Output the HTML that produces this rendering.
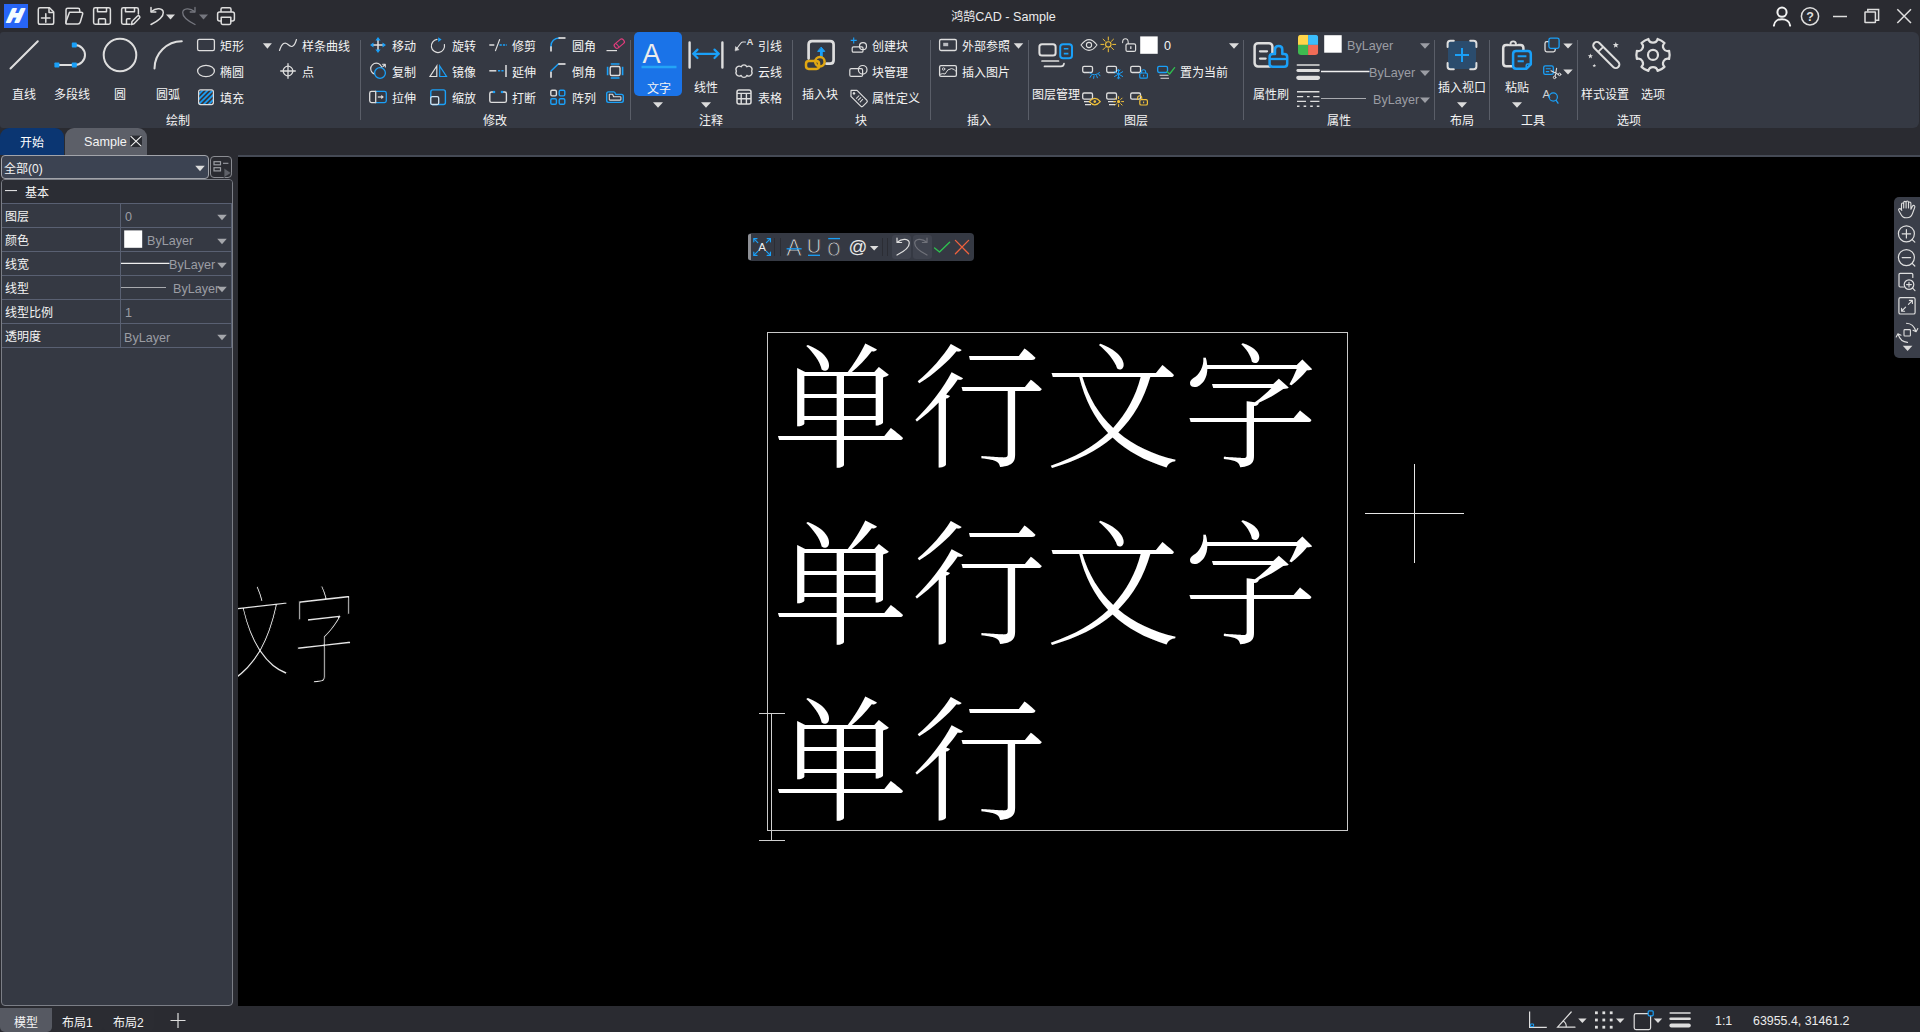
<!DOCTYPE html>
<html lang="zh-CN">
<head>
<meta charset="utf-8">
<title>鸿鹄CAD - Sample</title>
<style>
*{box-sizing:border-box;margin:0;padding:0}
html,body{width:1920px;height:1032px;overflow:hidden;background:#2a2b31}
body{position:relative;font-family:"Liberation Sans","Noto Sans CJK SC",sans-serif;font-size:12px;color:#f2f2f2}
.abs{position:absolute}
svg{position:absolute;overflow:visible}
.t{position:absolute;white-space:nowrap;line-height:14px;height:14px;font-size:12px;color:#f4f4f4}
.tc{text-align:center}
#title{left:0;top:0;width:1920px;height:32px;background:#2a2b31}
#ribbon{left:0;top:32px;width:1919px;height:95.5px;background:#353943;border-radius:3px 6px 6px 3px}
.sep{position:absolute;top:40px;width:1px;height:80px;background:#5a5e68}
#tab1{left:0;top:128px;width:64px;height:27px;background:#0b3672;border-radius:9px 9px 0 0}
#tab2{left:65px;top:128px;width:82px;height:27px;background:#5c5f68;border-radius:9px 9px 0 0}
#hline{left:238px;top:155px;width:1682px;height:2px;background:#454a55}
#canvas{left:238px;top:157px;width:1682px;height:849px;background:#000;overflow:hidden}
#lpanel{left:0;top:155px;width:234px;height:852px;background:#2a2b31}
#bottom{left:0;top:1006px;width:1920px;height:26px;background:#2a2b31}

</style>
</head>
<body>
<div id="title" class="abs"></div>
<div id="ribbon" class="abs"></div>
<div id="tab1" class="abs"></div>
<div id="tab2" class="abs"></div>
<div id="hline" class="abs"></div>
<div id="canvas" class="abs"></div>
<div id="lpanel" class="abs"></div>
<div id="bottom" class="abs"></div>
<div class="sep" style="left:360px"></div>
<div class="sep" style="left:630px"></div>
<div class="sep" style="left:792px"></div>
<div class="sep" style="left:930px"></div>
<div class="sep" style="left:1028px"></div>
<div class="sep" style="left:1243px"></div>
<div class="sep" style="left:1434px"></div>
<div class="sep" style="left:1489px"></div>
<div class="sep" style="left:1577px"></div>
<div class="abs" style="left:634px;top:32px;width:48px;height:64px;background:#1a73e8;border-radius:5px"></div>
<div class="abs" style="left:1px;top:155px;width:208px;height:24px;background:#3c4352;border:1px solid #a2a4aa;border-radius:4px"></div>
<div class="abs" style="left:210.4px;top:156.4px;width:21.4px;height:21.4px;border:1.3px solid #8b8d93;border-radius:4px"></div>
<div class="abs" style="left:1px;top:179px;width:232px;height:827px;background:#353943;border:1px solid #7b7e86;border-radius:4px"></div>
<div class="abs" style="left:2px;top:180px;width:230px;height:23px;background:#2b2d34;border-radius:3px 3px 0 0"></div>
<div class="abs" style="left:2px;top:203px;width:230px;height:1px;background:#596072"></div>
<div class="abs" style="left:2px;top:227px;width:230px;height:1px;background:#596072"></div>
<div class="abs" style="left:2px;top:251px;width:230px;height:1px;background:#596072"></div>
<div class="abs" style="left:2px;top:275px;width:230px;height:1px;background:#596072"></div>
<div class="abs" style="left:2px;top:299px;width:230px;height:1px;background:#596072"></div>
<div class="abs" style="left:2px;top:323px;width:230px;height:1px;background:#596072"></div>
<div class="abs" style="left:2px;top:347px;width:230px;height:1px;background:#596072"></div>
<div class="abs" style="left:120px;top:203px;width:1px;height:145px;background:#596072"></div>
<div class="abs" style="left:231px;top:203px;width:1px;height:145px;background:#596072"></div>
<div class="abs" style="left:748px;top:233px;width:226px;height:28px;background:#353943;border-radius:4px"></div>
<div class="abs" style="left:748px;top:234px;width:3px;height:26px;background:#8d8f95;border-radius:2px 0 0 2px"></div>
<div class="abs" style="left:892px;top:235px;width:19px;height:24px;background:#3f434e;border-radius:3px"></div>
<div class="abs" style="left:913px;top:235px;width:19px;height:24px;background:#3f434e;border-radius:3px"></div>
<div class="abs" style="left:1894px;top:197px;width:30px;height:161px;background:#3a3e49;border-radius:5px"></div>
<div class="abs" style="left:0;top:1008px;width:52px;height:24px;background:#565962;border-radius:0 0 5px 5px"></div>
<div class="abs" style="left:52px;top:1008px;width:51px;height:24px;background:#2b2c32;border-radius:0 0 5px 5px"></div>
<div class="abs" style="left:103px;top:1008px;width:51px;height:24px;background:#2b2c32;border-radius:0 0 5px 5px"></div>
<svg id="ov" class="abs" style="left:0;top:0" width="1920" height="1032" viewBox="0 0 1920 1032" fill="none" stroke-linecap="round" stroke-linejoin="round">
<rect x="4" y="4" width="24" height="24" fill="#2765f6" stroke="none"/>
<g transform="translate(12.6 22.2) skewX(-24) scale(1.1 1.08)"><text x="0" y="0" text-anchor="middle" font-family="'Liberation Sans',sans-serif" font-size="17.5" font-weight="bold" fill="#f2fbff" stroke="#f2fbff" stroke-width="2" stroke-linejoin="round">H</text></g>
<path d="M40 7.8H49.5L53.7 12V22.5Q53.7 24.3 52 24.3H40Q38.3 24.3 38.3 22.5V9.5Q38.3 7.8 40 7.8Z" stroke="#dedede" stroke-width="1.5"/><path d="M49 8.2V12.5H53.3" stroke="#dedede" stroke-width="1.5" stroke-width="1"/><path d="M41.5 18H50M45.8 13.7V22.3" stroke="#dedede" stroke-width="1.5"/>
<path d="M66 22.5V10Q66 8.3 67.7 8.3H78Q79.7 8.3 79.7 10V12.3" stroke="#dedede" stroke-width="1.5"/><path d="M69.5 12.3H81Q83.2 12.3 82.6 14.3L80.3 22Q79.7 24 77.8 24H67.2Q65.3 24 65.9 22Z" stroke="#dedede" stroke-width="1.5"/>
<path d="M95.3 7.8H108.7Q110.4 7.8 110.4 9.5V22.6Q110.4 24.3 108.7 24.3H95.3Q93.6 24.3 93.6 22.6V9.5Q93.6 7.8 95.3 7.8Z" stroke="#dedede" stroke-width="1.5"/><path d="M97.5 8V11.7H106.5V8M98.5 24V19.8Q98.5 18.8 99.5 18.8H104.5Q105.5 18.8 105.5 19.8V24" stroke="#dedede" stroke-width="1.5"/>
<path d="M130 24.3H123.3Q121.6 24.3 121.6 22.6V9.5Q121.6 7.8 123.3 7.8H136.7Q138.4 7.8 138.4 9.5V14" stroke="#dedede" stroke-width="1.5"/><path d="M125.5 8V11.7H134.5V8M126.5 24V19.8Q126.5 18.8 127.5 18.8H130" stroke="#dedede" stroke-width="1.5"/><path d="M131.5 24.5L132 21.5L137.5 16Q138.5 15.2 139.5 16.2Q140.3 17.2 139.5 18L134 23.7Z" stroke="#dedede" stroke-width="1.5" stroke-width="1.2"/>
<path d="M151 24.5C157 21.5 163.5 17.5 163.3 12.5C163 8 156 7.5 151.5 11.5" stroke="#dedede" stroke-width="1.5" stroke-width="1.3"/><path d="M151 7.5V12H155.8" stroke="#dedede" stroke-width="1.5" stroke-width="1.3"/>
<path d="M166.0 14.5H175.0L170.5 19.5Z" fill="#dcdcdc"/>
<path d="M195 24.5C189 21.5 182.5 17.5 182.7 12.5C183 8 190 7.5 194.5 11.5" stroke="#75777f" stroke-width="1.3"/><path d="M195 7.5V12H190.2" stroke="#75777f" stroke-width="1.3"/>
<path d="M199.0 14.5H208.0L203.5 19.5Z" fill="#75777f"/>
<path d="M221 11.5V9.2Q221 7.8 222.4 7.8H229.6Q231 7.8 231 9.2V11.5" stroke="#dedede" stroke-width="1.5"/><path d="M221 21H219.6Q217.6 21 217.6 19V14Q217.6 12 219.6 12H232.4Q234.4 12 234.4 14V19Q234.4 21 232.4 21H231" stroke="#dedede" stroke-width="1.5"/><path d="M221.2 17.3H230.8V23Q230.8 24.4 229.4 24.4H222.6Q221.2 24.4 221.2 23Z" stroke="#dedede" stroke-width="1.5"/>
<circle cx="1782" cy="12.2" r="4.6" stroke="#f2f2f2" stroke-width="2"/><path d="M1773.9 25.6C1774.6 17 1789.4 17 1790.1 25.6" stroke="#f2f2f2" stroke-width="2"/>
<circle cx="1810" cy="16.3" r="8.6" stroke="#dedede" stroke-width="1.5" stroke-width="1.3"/>
<text x="1810" y="21" text-anchor="middle" font-family="'Liberation Sans',sans-serif" font-size="12.5" font-weight="bold" fill="#dedede" stroke="none">?</text>
<path d="M1833 16.5H1847" stroke="#dedede" stroke-width="1.5" stroke-width="1.1" stroke-linecap="butt"/>
<rect x="1865" y="12" width="10.4" height="10.6" rx="0.4" stroke="#dedede" stroke-width="1.5" stroke-width="1.1" stroke-linejoin="miter"/><path d="M1867.8 11.6V9.4H1878.6V20.2H1876" stroke="#dedede" stroke-width="1.5" stroke-width="1.1" stroke-linejoin="miter" stroke-linecap="butt"/>
<path d="M1897.3 9.3L1911 23M1911 9.3L1897.3 23" stroke="#dedede" stroke-width="1.5" stroke-width="1.2" stroke-linecap="butt"/>
<path d="M10.5 68.5L37.8 41.2" stroke="#dedede" stroke-width="2"/>
<path d="M57 65H75A10 10 0 0 0 75 45" stroke="#dedede" stroke-width="2"/>
<rect x="71.8" y="42.6" width="5" height="5" rx="0.8" fill="#1aa0f8" stroke="none"/><rect x="54.4" y="62.5" width="5" height="5" rx="0.8" fill="#1aa0f8" stroke="none"/><rect x="71.8" y="62.5" width="5" height="5" rx="0.8" fill="#1aa0f8" stroke="none"/>
<circle cx="120" cy="55" r="16.3" stroke="#dedede" stroke-width="2"/>
<path d="M154.5 68.5A27.5 27.5 0 0 1 181.8 41.3" stroke="#dedede" stroke-width="2"/>
<rect x="197.6" y="39.4" width="16.8" height="11.3" rx="1.6" stroke="#dedede" stroke-width="1.3"/>
<path d="M262.9 43.25H271.9L267.4 48.75Z" fill="#dcdcdc"/>
<ellipse cx="206" cy="71" rx="8.4" ry="5.7" stroke="#dedede" stroke-width="1.3"/>
<clipPath id="hc"><rect x="199" y="90.2" width="14" height="14" rx="1.5"/></clipPath><g clip-path="url(#hc)" stroke="#1aa0f8" stroke-width="1.7" stroke-linecap="butt"><path d="M192 96L204 84M192 101L209 84M194 104L214 84M199 104L216 87M203.5 104.5L216 92M208.5 104.5L216 97"/></g><rect x="198.6" y="89.8" width="14.8" height="14.8" rx="2" stroke="#dedede" stroke-width="1.2"/>
<path d="M279.5 50.5C282 43 285 41.5 288 44.5C291 47.5 294 48 296.5 39.5" stroke="#dedede" stroke-width="1.2"/>
<circle cx="288" cy="71" r="4.8" stroke="#dedede" stroke-width="1.3"/><path d="M280.7 71H295.3M288 63.7V78.3" stroke="#dedede" stroke-width="1.3"/>
<path d="M372.5 45H383.5M378 39.5V50.5" stroke="#dedede" stroke-width="1.5" stroke-linecap="butt"/>
<path d="M378 37L380.6 40.5H375.4ZM378 53L380.6 49.5H375.4ZM370 45L373.5 42.4V47.6ZM386 45L382.5 42.4V47.6Z" fill="#1aa0f8" stroke="none"/>
<circle cx="376.3" cy="68.8" r="5.6" stroke="#dedede" stroke-width="1.2"/><circle cx="380" cy="73" r="5.4" stroke="#1aa0f8" stroke-width="1.3" fill="#353943"/><path d="M382.5 64.2H385.3V67M385.2 64.3L383 66.5" stroke="#dedede" stroke-width="1.1"/>
<path d="M375.7 91.4H371.5Q369.7 91.4 369.7 93.2V100.8Q369.7 102.6 371.5 102.6H375.7" stroke="#dedede" stroke-width="1.3"/><path d="M375.7 91.4H384.5Q386.3 91.4 386.3 93.2V100.8Q386.3 102.6 384.5 102.6H375.7" stroke="#1aa0f8" stroke-width="1.3"/><path d="M375.7 91.4V102.6" stroke="#dedede" stroke-width="1.3"/><path d="M377.8 97H382" stroke="#dedede" stroke-width="1.3" stroke-linecap="butt"/><path d="M381.3 94.8L383.8 97L381.3 99.2Z" fill="#dedede" stroke="none"/>
<path d="M437 39.4A6.6 6.6 0 1 0 444.4 44.5" stroke="#dedede" stroke-width="1.2"/><path d="M438.2 37.2L441.6 39.6L438.2 42Z" fill="#1aa0f8" stroke="none"/>
<path d="M436.8 66V76.5H430Z" stroke="#dedede" stroke-width="1.2" stroke-linejoin="miter"/><path d="M439.7 66V76.5H446.5Z" stroke="#1aa0f8" stroke-width="1.2" stroke-linejoin="miter"/>
<rect x="430.8" y="89.9" width="14.6" height="14.6" rx="2" stroke="#1aa0f8" stroke-width="1.4"/><rect x="430.8" y="96.6" width="7.9" height="7.9" rx="1.5" stroke="#cfe3f3" stroke-width="1.3" fill="#353943"/>
<path d="M489.3 45H494.3" stroke="#dedede" stroke-width="1.5" stroke-linecap="butt"/><path d="M495.5 50.6L499.6 39.6" stroke="#dedede" stroke-width="1.2"/><path d="M499.5 45H507" stroke="#1aa0f8" stroke-width="1.5" stroke-dasharray="2.3 1.1" stroke-linecap="butt"/>
<path d="M489.3 70.8H496.3" stroke="#dedede" stroke-width="1.5" stroke-linecap="butt"/><path d="M498 70.8H504" stroke="#1aa0f8" stroke-width="1.5" stroke-dasharray="2.2 1.2" stroke-linecap="butt"/><path d="M506 65V77" stroke="#dedede" stroke-width="1.5" stroke-linecap="butt"/>
<path d="M493.8 92H491.5Q489.8 92 489.8 93.7V100.7Q489.8 102.4 491.5 102.4H504.7Q506.4 102.4 506.4 100.7V93.7Q506.4 92 504.7 92H502.2" stroke="#dedede" stroke-width="1.4"/><circle cx="494" cy="92" r="1.3" fill="#1aa0f8" stroke="none"/><circle cx="502" cy="92" r="1.3" fill="#1aa0f8" stroke="none"/>
<path d="M551 46V51.5" stroke="#dedede" stroke-width="1.7" stroke-linecap="butt"/><path d="M551 46A8 8 0 0 1 559 38" stroke="#1aa0f8" stroke-width="1.4"/><path d="M558.5 38H565.5" stroke="#dedede" stroke-width="1.7" stroke-linecap="butt"/>
<path d="M551 71.5V77.8" stroke="#dedede" stroke-width="1.7" stroke-linecap="butt"/><path d="M551 71L558.3 64" stroke="#1aa0f8" stroke-width="1.4"/><path d="M558.3 64H565.5" stroke="#dedede" stroke-width="1.7" stroke-linecap="butt"/>
<rect x="550.8" y="90.3" width="5.6" height="5.6" rx="1.3" stroke="#dedede" stroke-width="1.4"/><rect x="559.2" y="90.3" width="5.6" height="5.6" rx="1.3" stroke="#1aa0f8" stroke-width="1.4"/><rect x="550.8" y="98.7" width="5.6" height="5.6" rx="1.3" stroke="#1aa0f8" stroke-width="1.4"/><rect x="559.2" y="98.7" width="5.6" height="5.6" rx="1.3" stroke="#1aa0f8" stroke-width="1.4"/>
<path d="M606.5 50.6H617" stroke="#dedede" stroke-width="1.2" stroke-linecap="butt"/><g transform="rotate(-40 619.3 43.6)"><rect x="613.8" y="41" width="11" height="5.2" rx="2" stroke="#e03c7c" stroke-width="1.2"/><path d="M616.6 41.2Q617.6 43.6 616.6 46" stroke="#e03c7c" stroke-width="1"/></g>
<rect x="610.2" y="66.5" width="9.8" height="9" rx="1.5" stroke="#dedede" stroke-width="1.4"/><path d="M610.8 64H619.5M610.8 78H619.5M607.6 66.8V75.3M622.6 66.8V75.3" stroke="#1aa0f8" stroke-width="1.6" stroke-linecap="butt"/>
<path d="M608.5 91.9H613.5Q614.8 91.9 615.3 93.2L615.8 94.4H621.5Q623.3 94.4 623.3 96.2V100.6Q623.3 102.4 621.5 102.4H608.5Q606.7 102.4 606.7 100.6V93.7Q606.7 91.9 608.5 91.9Z" stroke="#1aa0f8" stroke-width="1.4"/><path d="M609.3 94.3H612.6L613.6 96.8H620.3Q620.9 96.8 620.9 97.4V99.5Q620.9 100.1 620.3 100.1H609.9Q609.3 100.1 609.3 99.5Z" stroke="#dedede" stroke-width="1.1"/>
<text x="651.5" y="63.2" text-anchor="middle" font-family="'Liberation Sans',sans-serif" font-size="27" fill="#ececec" stroke="none">A</text>
<path d="M641.5 67H676.5" stroke="#24a4f6" stroke-width="2.4" stroke-linecap="butt"/>
<path d="M653.0 102.25H663.0L658 107.75Z" fill="#dcdcdc"/>
<path d="M689.6 42.5V67.5M722.4 42.5V67.5" stroke="#dedede" stroke-width="2.4"/><path d="M693.5 53.8H718.5" stroke="#1aa0f8" stroke-width="2.2"/><path d="M697.5 49.6L693.3 53.8L697.5 58M714.5 49.6L718.7 53.8L714.5 58" stroke="#1aa0f8" stroke-width="2.2"/>
<path d="M701.0 102.25H711.0L706 107.75Z" fill="#dcdcdc"/>
<path d="M745.5 42H743Q741.8 42 741 43L736 49.5" stroke="#dedede" stroke-width="1.2"/><path d="M735.2 50.6L735.6 46.6L738.8 49.4Z" fill="#dedede" stroke="#dedede" stroke-width="0.6"/>
<text x="750" y="44.8" text-anchor="middle" font-family="'Liberation Sans',sans-serif" font-size="9.5" font-weight="bold" fill="#dedede" stroke="none">A</text>
<path d="M736.4 71.1A3.3 3.3 0 0 1 741.2 66.8A3 3 0 0 1 746.8 66.8A3.3 3.3 0 0 1 751.6 71.1A3.3 3.3 0 0 1 746.8 75.4A3 3 0 0 1 741.2 75.4A3.3 3.3 0 0 1 736.4 71.1Z" stroke="#dedede" stroke-width="1.3"/>
<rect x="737" y="90" width="14" height="14" rx="2" stroke="#dedede" stroke-width="1.5"/><path d="M737 93.4H751M737 98.8H751M741.2 93.4V104M746.4 93.4V104" stroke="#dedede" stroke-width="1.4" stroke-linecap="butt"/>
<path d="M808.6 58.6V44.6Q808.6 41.1 812.1 41.1H830.1Q833.6 41.1 833.6 44.6V60.2Q833.6 63.7 830.1 63.7H826.4" stroke="#dedede" stroke-width="2.7"/>
<path d="M821.4 57.2V50.5" stroke="#1aa0f8" stroke-width="2.8" stroke-linecap="butt"/><path d="M821.4 47.4L824.8 51.4H818Z" fill="#1aa0f8" stroke="#1aa0f8" stroke-width="1"/>
<rect x="806" y="61.1" width="13.1" height="7.8" rx="2.8" stroke="#e0a712" stroke-width="2.5"/><circle cx="819.9" cy="61.7" r="4.7" stroke="#e0a712" stroke-width="2.5"/>
<path d="M850.7 40.4H856.7M853.7 37.4V43.4" stroke="#1aa0f8" stroke-width="1.1" stroke-linecap="butt"/><rect x="852.2" y="46.8" width="10.8" height="5.4" rx="1.3" stroke="#dedede" stroke-width="1.2"/><circle cx="863" cy="46.2" r="3.5" stroke="#dedede" stroke-width="1.2"/>
<rect x="849.8" y="68.7" width="12.8" height="7.7" rx="1.5" stroke="#dedede" stroke-width="1.2"/><circle cx="862.7" cy="69.8" r="4.3" stroke="#dedede" stroke-width="1.2"/>
<g transform="translate(850.6 90) rotate(45)"><path d="M0.6 0L4.8 -4.3H18.6Q20.2 -4.3 20.2 -2.7V2.7Q20.2 4.3 18.6 4.3H4.8Z" stroke="#dedede" stroke-width="1.2"/><circle cx="4.8" cy="0" r="1.3" fill="#dedede" stroke="none"/><path d="M10 -2.2V2.2M12.6 -2.2V2.2M15.2 -2.2V2.2" stroke="#dedede" stroke-width="1" stroke-linecap="butt"/></g>
<rect x="939.6" y="39.5" width="16.8" height="11" rx="1.4" stroke="#dedede" stroke-width="1.3"/><rect x="943.2" y="42.8" width="5" height="3.4" fill="#b9bbc0" stroke="none"/>
<path d="M1013.75 43.25H1023.25L1018.5 48.75Z" fill="#dcdcdc"/>
<rect x="939.6" y="65.6" width="16.8" height="10.8" rx="1.4" stroke="#dedede" stroke-width="1.3"/><circle cx="943.6" cy="69" r="1.2" stroke="#dedede" stroke-width="0.9"/><path d="M940 74.3Q943 73 945 74Q947.5 68.5 951.5 68.6Q954.5 68.8 956.2 71.5" stroke="#dedede" stroke-width="1"/>
<rect x="1039.4" y="44.2" width="16.2" height="11.4" rx="2.6" stroke="#dedede" stroke-width="2"/><path d="M1042 61H1058.5M1044.5 66.4H1061Q1063.6 66.4 1064 63.6" stroke="#dedede" stroke-width="1.7"/><rect x="1060.2" y="44.2" width="11.8" height="14" rx="2.8" stroke="#1aa0f8" stroke-width="2" fill="#353943"/><path d="M1063.8 48.7H1068.4M1063.8 53.6H1068.4" stroke="#1aa0f8" stroke-width="1.6" stroke-linecap="butt"/>
<path d="M1081 45Q1085 39.6 1089 39.6Q1093 39.6 1097 45Q1093 50.4 1089 50.4Q1085 50.4 1081 45Z" stroke="#dedede" stroke-width="1.1"/><circle cx="1089" cy="45" r="2.6" stroke="#dedede" stroke-width="1.1"/>
<circle cx="1108.3" cy="44.4" r="2.7" stroke="#f2c23a" stroke-width="1.1"/><path d="M1108.3 37V40M1108.3 48.8V51.8M1100.9 44.4H1103.9M1112.7 44.4H1115.7M1103.1 39.2L1105.2 41.3M1111.4 47.5L1113.5 49.6M1103.1 49.6L1105.2 47.5M1111.4 41.3L1113.5 39.2" stroke="#f2c23a" stroke-width="1"/>
<rect x="1126" y="43.8" width="9.6" height="7.6" rx="1.5" stroke="#dedede" stroke-width="1.2"/><path d="M1122.6 42.6Q1122.6 38.8 1125.4 38.8Q1128.2 38.8 1128.2 42.6V43.6" stroke="#dedede" stroke-width="1.1"/><path d="M1130.8 46.3V49" stroke="#dedede" stroke-width="1.3" stroke-linecap="butt"/>
<rect x="1140.2" y="36.4" width="17.5" height="17.4" fill="#fff" stroke="none"/>
<path d="M1229.0 43.25H1239.0L1234 48.75Z" fill="#dcdcdc"/>
<rect x="1082.7" y="66.3" width="9.8" height="6.2" rx="1.4" stroke="#dedede" stroke-width="1.3"/>
<path d="M1090 73.2Q1094.5 76.8 1099.5 72.6M1091.3 75.3L1090 77.5M1094 76L1093.6 78.4M1096.6 75.6L1097.4 77.8M1098.6 74L1100 75.8" stroke="#1aa0f8" stroke-width="1"/>
<rect x="1106.7" y="66.3" width="9.8" height="6.2" rx="1.4" stroke="#dedede" stroke-width="1.3"/>
<path d="M1118.6 69.4V78.8M1114.5 71.7L1122.7 76.5M1114.5 76.5L1122.7 71.7M1117.2 70L1118.6 71.2L1120 70M1117.2 78.2L1118.6 77L1120 78.2" stroke="#1aa0f8" stroke-width="1"/>
<rect x="1130.7" y="66.3" width="9.8" height="6.2" rx="1.4" stroke="#dedede" stroke-width="1.3"/>
<rect x="1139.8" y="73" width="7.6" height="5.2" rx="1.3" stroke="#1aa0f8" stroke-width="1.2" fill="#353943"/><path d="M1141.6 72.8V71.8Q1141.6 69.8 1143.6 69.8Q1145.6 69.8 1145.6 71.8V72.8" stroke="#1aa0f8" stroke-width="1.1"/><path d="M1143.6 74.8V76.4" stroke="#1aa0f8" stroke-width="1.1" stroke-linecap="butt"/>
<rect x="1157.7" y="66.3" width="9.8" height="6.2" rx="1.4" stroke="#1aa0f8" stroke-width="1.3"/>
<path d="M1159.5 75.3H1168.5M1160.5 78.3H1169" stroke="#dedede" stroke-width="1.1" stroke-linecap="butt"/><path d="M1167 71.4L1169.6 74L1174.6 67.6" stroke="#2fbf4f" stroke-width="1.3"/>
<rect x="1082.7" y="93" width="9.8" height="6.2" rx="1.4" stroke="#dedede" stroke-width="1.3"/>
<path d="M1084 101.6H1091.5M1085 104.6H1091" stroke="#dedede" stroke-width="1.1" stroke-linecap="butt"/>
<path d="M1089.3 101.6Q1092 98.4 1094.8 98.4Q1097.6 98.4 1100.3 101.6Q1097.6 104.8 1094.8 104.8Q1092 104.8 1089.3 101.6Z" stroke="#f2c23a" stroke-width="1.2" fill="#353943"/><circle cx="1094.8" cy="101.6" r="1.3" fill="#f2c23a" stroke="none"/>
<rect x="1106.7" y="93" width="9.8" height="6.2" rx="1.4" stroke="#dedede" stroke-width="1.3"/>
<path d="M1108 101.6H1115.5M1109 104.6H1115" stroke="#dedede" stroke-width="1.1" stroke-linecap="butt"/>
<circle cx="1118.6" cy="101.6" r="1.6" fill="#f2c23a" stroke="none"/><path d="M1118.6 96.6V98.6M1118.6 104.6V106.6M1113.6 101.6H1115.6M1121.6 101.6H1123.6M1115.1 98.1L1116.5 99.5M1120.7 103.7L1122.1 105.1M1115.1 105.1L1116.5 103.7M1120.7 99.5L1122.1 98.1" stroke="#f2c23a" stroke-width="1"/>
<rect x="1130.7" y="93" width="9.8" height="6.2" rx="1.4" stroke="#dedede" stroke-width="1.3"/>
<rect x="1139.8" y="99.6" width="7.6" height="5.4" rx="1.3" stroke="#f2c23a" stroke-width="1.2" fill="#353943"/><path d="M1137.6 99.4V98Q1137.6 95.8 1139.7 95.8Q1141.8 95.8 1141.8 98V99.4" stroke="#f2c23a" stroke-width="1.1"/><path d="M1143.6 101.5V103.2" stroke="#f2c23a" stroke-width="1.1" stroke-linecap="butt"/>
<rect x="1254.6" y="43.2" width="17.8" height="23.3" rx="3.4" stroke="#dedede" stroke-width="2.5"/><path d="M1260 51.3H1267M1260 58.6H1265.6" stroke="#dedede" stroke-width="2.3"/>
<path d="M1272.6 66.7H1284.2Q1287.2 66.7 1287.2 63.7V57Q1287.2 54 1284.2 54H1282.3V49.4Q1282.3 46.1 1278.65 46.1Q1275 46.1 1275 49.4V54H1272.6Q1269.6 54 1269.6 57V63.7Q1269.6 66.7 1272.6 66.7Z" stroke="#1aa0f8" stroke-width="2.5" fill="#353943"/><path d="M1269.6 59H1287.2" stroke="#1aa0f8" stroke-width="2.3" stroke-linecap="butt"/>
<clipPath id="cc"><rect x="1298" y="34.8" width="20.2" height="20.2" rx="3.2"/></clipPath><g clip-path="url(#cc)" stroke="none"><rect x="1298" y="34.8" width="10.1" height="10.1" fill="#ffd54a"/><rect x="1308.1" y="34.8" width="10.1" height="10.1" fill="#3bbdfb"/><rect x="1298" y="44.9" width="10.1" height="10.1" fill="#3fb950"/><rect x="1308.1" y="44.9" width="10.1" height="10.1" fill="#f06c57"/></g>
<rect x="1324.2" y="35.2" width="17.5" height="17.5" fill="#fff" stroke="none"/>
<path d="M1420.0 43.25H1430.0L1425 48.75Z" fill="#9b9da4"/>
<path d="M1297.3 64.9H1319" stroke="#dedede" stroke-width="1.5"/><path d="M1297.8 70.5H1318.5" stroke="#dedede" stroke-width="2.8"/><path d="M1298.3 77.8H1318" stroke="#dedede" stroke-width="4.2"/>
<path d="M1321 71.5H1369.5" stroke="#f0f0f0" stroke-width="1.3" stroke-linecap="butt"/>
<path d="M1420.0 70.45H1430.0L1425 75.95Z" fill="#9b9da4"/>
<path d="M1297 91.8H1319.4M1297 96.6H1303.2M1307 96.6H1309.6M1313.2 96.6H1319.4M1297 101.4H1306M1310.2 101.4H1319.4M1297 106.2H1299.5M1303.6 106.2H1306.2M1310.2 106.2H1312.8M1316.8 106.2H1319.4" stroke="#dedede" stroke-width="1.4" stroke-linecap="butt"/>
<path d="M1321 98.5H1366" stroke="#a8aaaf" stroke-width="1" stroke-linecap="butt"/>
<path d="M1420.0 97.55H1430.0L1425 103.05Z" fill="#9b9da4"/>
<rect x="1448" y="41" width="28" height="28" rx="3" fill="#2b4c6d" stroke="none"/><path d="M1447.6 47V43.6Q1447.6 40.8 1450.4 40.8H1453.8M1470.2 40.8H1473.6Q1476.4 40.8 1476.4 43.6V47M1476.4 63V66.4Q1476.4 69.2 1473.6 69.2H1470.2M1453.8 69.2H1450.4Q1447.6 69.2 1447.6 66.4V63" stroke="#dedede" stroke-width="2"/><path d="M1455 55H1469M1462 48V62" stroke="#1aa0f8" stroke-width="2" stroke-linecap="butt"/>
<path d="M1457.0 102.25H1467.0L1462 107.75Z" fill="#dcdcdc"/>
<path d="M1508 44.9H1506.2Q1503.2 44.9 1503.2 47.9V63.2Q1503.2 66.2 1506.2 66.2H1520.4Q1523.4 66.2 1523.4 63.2V47.9Q1523.4 44.9 1520.4 44.9H1518.4" stroke="#dedede" stroke-width="2.5"/><path d="M1509 45.2H1517.4M1510.4 44.6Q1510.4 41.4 1513.2 41.4Q1516 41.4 1516 44.6" stroke="#dedede" stroke-width="1.9"/>
<path d="M1516.1 51.1H1527.8Q1530.8 51.1 1530.8 54.1V64.3L1526.3 68.8H1516.1Q1513.1 68.8 1513.1 65.8V54.1Q1513.1 51.1 1516.1 51.1Z" stroke="#1aa0f8" stroke-width="2.5" fill="#353943"/><path d="M1517.6 56.2H1526.4M1517.6 61.3H1523.8" stroke="#1aa0f8" stroke-width="2" stroke-linecap="butt"/><path d="M1530.4 64H1527.8Q1526.2 64 1526.2 65.6V68.4" stroke="#1aa0f8" stroke-width="1.5"/>
<path d="M1512.0 102.25H1522.0L1517 107.75Z" fill="#dcdcdc"/>
<rect x="1545" y="41.6" width="10.2" height="10.2" rx="1.8" stroke="#dedede" stroke-width="1.3"/><rect x="1548.9" y="38.1" width="10.2" height="10.2" rx="1.8" stroke="#1aa0f8" stroke-width="1.3" fill="#353943"/>
<path d="M1563.25 43.5H1572.75L1568 48.5Z" fill="#dcdcdc"/>
<rect x="1543.7" y="65.8" width="9.6" height="8.6" rx="1.6" stroke="#1aa0f8" stroke-width="1.3"/><path d="M1545.8 68.8H1550.8M1545.8 71.6H1549.2" stroke="#1aa0f8" stroke-width="1.1" stroke-linecap="butt"/>
<path d="M1551 70.8L1558.4 74.6M1556.6 68.4L1555.2 76" stroke="#dedede" stroke-width="1.1"/><circle cx="1559.6" cy="74.4" r="1.25" stroke="#dedede" stroke-width="1"/><circle cx="1554.6" cy="77.4" r="1.25" stroke="#dedede" stroke-width="1"/>
<path d="M1563.25 69.5H1572.75L1568 74.5Z" fill="#dcdcdc"/>
<text x="1546.2" y="98.4" text-anchor="middle" font-family="'Liberation Sans',sans-serif" font-size="11.3" fill="#cfcfcf" stroke="none">A</text>
<circle cx="1553.3" cy="97" r="4.1" stroke="#1aa0f8" stroke-width="1.2"/><path d="M1556 100.2L1558 103.2" stroke="#1aa0f8" stroke-width="1.3"/>
<g transform="rotate(-45 1606.3 55)"><rect x="1602.7" y="38" width="7.2" height="34" rx="3.6" stroke="#dedede" stroke-width="2"/><path d="M1602.7 47.1H1609.9" stroke="#dedede" stroke-width="1.8" stroke-linecap="butt"/></g>
<path d="M1615.80 42.00L1616.59 44.11L1618.84 44.21L1617.08 45.62L1617.68 47.79L1615.80 46.54L1613.92 47.79L1614.52 45.62L1612.76 44.21L1615.01 44.11Z" fill="#dedede" stroke="none"/>
<path d="M1590.40 53.50L1591.07 55.28L1592.97 55.37L1591.48 56.55L1591.99 58.38L1590.40 57.33L1588.81 58.38L1589.32 56.55L1587.83 55.37L1589.73 55.28Z" fill="#dedede" stroke="none"/>
<path d="M1594.30 63.80L1594.77 65.05L1596.11 65.11L1595.06 65.95L1595.42 67.24L1594.30 66.50L1593.18 67.24L1593.54 65.95L1592.49 65.11L1593.83 65.05Z" fill="#dedede" stroke="none"/>
<path d="M1669.11 50.88A16.6 16.6 0 0 1 1669.11 58.92A4.7 4.7 0 0 0 1664.53 66.84A16.6 16.6 0 0 1 1657.58 70.86A4.7 4.7 0 0 0 1648.42 70.86A16.6 16.6 0 0 1 1641.47 66.84A4.7 4.7 0 0 0 1636.89 58.92A16.6 16.6 0 0 1 1636.89 50.88A4.7 4.7 0 0 0 1641.47 42.96A16.6 16.6 0 0 1 1648.42 38.94A4.7 4.7 0 0 0 1657.58 38.94A16.6 16.6 0 0 1 1664.53 42.96A4.7 4.7 0 0 0 1669.11 50.88Z" stroke="#dedede" stroke-width="2.2" stroke-linejoin="round"/><circle cx="1653" cy="54.9" r="5" stroke="#dedede" stroke-width="2.2"/>
<rect x="130" y="135.6" width="12" height="11.4" fill="#2a2c32" stroke="none"/><path d="M130.6 136.2L141.4 146.4M141.4 136.2L130.6 146.4" stroke="#f0f0f0" stroke-width="1.1" stroke-linecap="butt"/>
<path d="M195.25 165.75H204.75L200 171.25Z" fill="#dcdcdc"/>
<rect x="214" y="161.7" width="6.5" height="3.1" stroke="#9c9ea4" stroke-width="1.2" stroke-linejoin="miter"/><rect x="214" y="167.7" width="6.5" height="3.2" stroke="#9c9ea4" stroke-width="1.2" stroke-linejoin="miter"/><path d="M223 163.3H228.4" stroke="#9c9ea4" stroke-width="1.1" stroke-linecap="butt"/><path d="M224.2 168.2L231.2 173L224.2 177.4Z" fill="#5f6168" stroke="#2a2b31" stroke-width="0.6"/>
<path d="M5 190.6H17" stroke="#f0f0f0" stroke-width="1" stroke-linecap="butt"/>
<path d="M217.25 214.65H226.75L222 220.15Z" fill="#a4a6ab"/>
<rect x="124.2" y="230.4" width="18" height="17.4" fill="#fff" stroke="none"/>
<path d="M217.25 238.65H226.75L222 244.15Z" fill="#a4a6ab"/>
<path d="M121 263.4H169.5" stroke="#f0f0f0" stroke-width="1.2" stroke-linecap="butt"/>
<path d="M217.25 262.65H226.75L222 268.15Z" fill="#a4a6ab"/>
<path d="M121 287.5H166" stroke="#a8aaaf" stroke-width="1" stroke-linecap="butt"/>
<path d="M217.25 286.65H226.75L222 292.15Z" fill="#a4a6ab"/>
<path d="M217.25 334.65H226.75L222 340.15Z" fill="#a4a6ab"/>
<path d="M774.5 238V256" stroke="#2b2d34" stroke-width="1" stroke-linecap="butt"/>
<path d="M780.5 238V256" stroke="#2b2d34" stroke-width="1" stroke-linecap="butt"/>
<path d="M882.5 238V256" stroke="#2b2d34" stroke-width="1" stroke-linecap="butt"/>
<path d="M887.5 238V256" stroke="#2b2d34" stroke-width="1" stroke-linecap="butt"/>
<path d="M754 238.8L757.8 242.6M770.2 238.8L766.4 242.6M754 255.2L757.8 251.4M770.2 255.2L766.4 251.4" stroke="#1aa0f8" stroke-width="1.2"/><path d="M753.8 241.8V238.6H757M767.2 238.6H770.4V241.8M753.8 252.2V255.4H757M767.2 255.4H770.4V252.2" stroke="#1aa0f8" stroke-width="1.2"/>
<text x="762.1" y="251" text-anchor="middle" font-family="'Liberation Sans',sans-serif" font-size="11.5" fill="#f0f0f0" stroke="none">A</text>
<text x="794" y="255.6" text-anchor="middle" font-family="'Liberation Sans',sans-serif" font-size="23" fill="#e6e6e6" stroke="#353943" stroke-width="0.9">A</text><path d="M786.6 248.8H801.6" stroke="#1aa0f8" stroke-width="1.3" stroke-linecap="butt"/>
<text x="814" y="253" text-anchor="middle" font-family="'Liberation Sans',sans-serif" font-size="20" fill="#e6e6e6" stroke="#353943" stroke-width="0.8">U</text><path d="M808 255.3H820" stroke="#1aa0f8" stroke-width="1.3" stroke-linecap="butt"/>
<text x="834" y="255.6" text-anchor="middle" font-family="'Liberation Sans',sans-serif" font-size="20.5" fill="#e6e6e6" stroke="#353943" stroke-width="0.8" transform="translate(834 0) scale(0.8 1) translate(-834 0)">O</text><path d="M828.2 238.6H840" stroke="#1aa0f8" stroke-width="1.3" stroke-linecap="butt"/>
<text x="858" y="253" text-anchor="middle" font-family="'Liberation Sans',sans-serif" font-size="18.5" fill="#e8e8e8" stroke="none">@</text>
<path d="M869.9000000000001 245.89999999999998H878.5L874.2 250.5Z" fill="#dcdcdc"/>
<path d="M897 255C903 252 909.5 248 909.3 243C909 238.5 902 238 897.5 242" stroke="#dedede" stroke-width="1.2"/><path d="M897 238V242.5H901.6" stroke="#dedede" stroke-width="1.2"/>
<path d="M927 255C921 252 914.5 248 914.7 243C915 238.5 922 238 926.5 242" stroke="#70727a" stroke-width="1.2"/><path d="M927 238V242.5H922.4" stroke="#70727a" stroke-width="1.2"/>
<path d="M934.6 248L939.5 252L949.6 242.2" stroke="#2fbf4f" stroke-width="1.4"/>
<path d="M955.4 240.4L968.6 253.8M968.6 240.4L955.4 253.8" stroke="#f0623e" stroke-width="1.3"/>
<path d="M1901.5 209.5V204.2Q1901.5 203 1902.6 203Q1903.7 203 1903.7 204.2V208M1903.7 208V202.6Q1903.7 201.4 1904.9 201.4Q1906.1 201.4 1906.1 202.6V208M1906.1 208V202.2Q1906.1 201 1907.3 201Q1908.5 201 1908.5 202.2V208M1908.5 208V203.2Q1908.5 202 1909.7 202Q1910.9 202 1910.9 203.2V209M1910.9 209.2L1912.4 206.2Q1913.2 205 1914.3 205.6Q1915.2 206.2 1914.7 207.5L1912.5 213.5Q1911 217.8 1907 217.8H1906Q1902.6 217.8 1901 214.5L1898.8 210.6Q1898.2 209.4 1899.2 208.8Q1900.2 208.3 1901 209.3L1901.8 210.4" stroke="#dedede" stroke-width="1.1"/>
<circle cx="1906.4" cy="233.8" r="8" stroke="#dedede" stroke-width="1.2"/><path d="M1902.2 233.8H1910.6M1906.4 229.6V238M1912.2 239.6L1914.8 242.2" stroke="#dedede" stroke-width="1.2"/>
<circle cx="1906.4" cy="257.6" r="8" stroke="#dedede" stroke-width="1.2"/><path d="M1902.2 257.6H1910.6M1912.2 263.4L1914.8 266" stroke="#dedede" stroke-width="1.2"/>
<path d="M1903.5 287H1900.2Q1899 287 1899 285.8V274.6Q1899 273.4 1900.2 273.4H1911.6Q1912.8 273.4 1912.8 274.6V277.5" stroke="#dedede" stroke-width="1.2"/><circle cx="1909" cy="284.6" r="4.8" stroke="#dedede" stroke-width="1.2"/><path d="M1906.6 284.6H1911.4M1909 282.2V287M1912.6 288.2L1915 290.6" stroke="#dedede" stroke-width="1.1"/>
<rect x="1898.9" y="297.6" width="16.2" height="16.4" rx="1.6" stroke="#dedede" stroke-width="1.2"/><path d="M1908.4 304.4L1912.2 300.6M1909.4 300.4H1912.4V303.4M1905.6 307.2L1901.8 311M1901.6 308.2V311.2H1904.6" stroke="#dedede" stroke-width="1.1"/>
<rect x="1904" y="329.6" width="6.4" height="6.4" rx="0.8" stroke="#dedede" stroke-width="1.1"/><path d="M1906.5 323.2Q1913.5 323.5 1916 331.5M1917.8 328.6L1916.1 331.8L1913 330.2M1907.5 342.4Q1900.5 342 1898 334M1896.2 336.9L1897.9 333.7L1901 335.3" stroke="#dedede" stroke-width="1.1"/>
<path d="M1902.8 345.79999999999995H1912.3999999999999L1907.6 351.0Z" fill="#dcdcdc"/>
<clipPath id="cvc"><rect x="238" y="157" width="1682" height="849"/></clipPath>
<g clip-path="url(#cvc)"><g transform="translate(230 674.5) skewY(-6.5) scale(0.6 1.03)"><text x="0" y="0" font-family="'Noto Sans CJK SC',sans-serif" font-weight="100" font-size="100" fill="#e6e6e6" stroke="#000" stroke-width="1.7">文<tspan x="105" y="10.4" font-size="104">字</tspan></text></g></g>
<g font-family="'Noto Serif CJK SC','Liberation Serif',serif" font-size="135" fill="#fff" stroke="none" font-weight="300">
<text x="773 911 1045 1183" y="457">单行文字</text>
<text x="773 911 1045 1183" y="633.5">单行文字</text>
<text x="773 911" y="810">单行</text>
</g>
<rect x="767.5" y="332.5" width="580" height="498" stroke="#c9c9c9" stroke-width="1" stroke-linejoin="miter"/>
<path d="M771.5 713V840M759 713.5H785M759 840.5H785" stroke="#d0d0d0" stroke-width="1" stroke-linecap="butt"/>
<path d="M1365 513.5H1464M1414.5 464V563" stroke="#e6e6e6" stroke-width="1" stroke-linecap="butt"/>
<path d="M170.5 1020.5H185.5M178 1013V1028" stroke="#dedede" stroke-width="1.2" stroke-linecap="butt"/>
<path d="M1529.6 1011.4V1027.4H1546.8" stroke="#dedede" stroke-width="1.2" stroke-linecap="butt" stroke-linejoin="miter"/><rect x="1531" y="1024" width="2.6" height="2.6" fill="none" stroke="#1aa0f8" stroke-width="1"/>
<path d="M1575 1027.2H1557.6L1571.2 1012" stroke="#dedede" stroke-width="1.2" stroke-linejoin="miter"/><path d="M1563.2 1021Q1566.6 1023 1566.2 1027" stroke="#dedede" stroke-width="1.1"/>
<path d="M1578.2 1018.5H1586.6000000000001L1582.4 1023.0999999999999Z" fill="#dcdcdc"/>
<rect x="1595.0" y="1011.4" width="2.8" height="2.8" fill="#dedede" stroke="none"/>
<rect x="1595.0" y="1018.6" width="2.8" height="2.8" fill="#dedede" stroke="none"/>
<rect x="1595.0" y="1025.8" width="2.8" height="2.8" fill="#dedede" stroke="none"/>
<rect x="1602.4" y="1011.4" width="2.8" height="2.8" fill="#dedede" stroke="none"/>
<rect x="1602.4" y="1018.6" width="2.8" height="2.8" fill="#dedede" stroke="none"/>
<rect x="1602.4" y="1025.8" width="2.8" height="2.8" fill="#dedede" stroke="none"/>
<rect x="1609.8" y="1011.4" width="2.8" height="2.8" fill="#dedede" stroke="none"/>
<rect x="1609.8" y="1018.6" width="2.8" height="2.8" fill="#dedede" stroke="none"/>
<rect x="1609.8" y="1025.8" width="2.8" height="2.8" fill="#dedede" stroke="none"/>
<path d="M1616.0 1018.5H1624.4L1620.2 1023.0999999999999Z" fill="#dcdcdc"/>
<rect x="1634.2" y="1013.6" width="16.4" height="16" rx="1.8" stroke="#dedede" stroke-width="1.2"/><rect x="1648.2" y="1010.8" width="5" height="5" rx="1" stroke="#1aa0f8" stroke-width="1.2" fill="#2a2b31"/>
<path d="M1653.8 1018.5H1662.2L1658 1023.0999999999999Z" fill="#dcdcdc"/>
<path d="M1670.2 1013H1690" stroke="#dedede" stroke-width="1.6"/><path d="M1670.6 1018.8H1689.6" stroke="#dedede" stroke-width="2.6"/><path d="M1671.4 1025.6H1688.8" stroke="#dedede" stroke-width="4"/>
</svg>
<div class="t tc" style="left:943.5px;width:120px;top:10px;color:#ececec;font-size:12.6px;"><span style="font-size:12px">鸿鹄</span>CAD - Sample</div>
<div class="t tc" style="left:-36px;width:120px;top:88px;color:#f4f4f4;font-size:12px;">直线</div>
<div class="t tc" style="left:12px;width:120px;top:88px;color:#f4f4f4;font-size:12px;">多段线</div>
<div class="t tc" style="left:60px;width:120px;top:88px;color:#f4f4f4;font-size:12px;">圆</div>
<div class="t tc" style="left:108px;width:120px;top:88px;color:#f4f4f4;font-size:12px;">圆弧</div>
<div class="t" style="left:220px;top:40px;color:#f4f4f4;font-size:12px;">矩形</div>
<div class="t" style="left:220px;top:66px;color:#f4f4f4;font-size:12px;">椭圆</div>
<div class="t" style="left:220px;top:92px;color:#f4f4f4;font-size:12px;">填充</div>
<div class="t" style="left:302px;top:40px;color:#f4f4f4;font-size:12px;">样条曲线</div>
<div class="t" style="left:302px;top:66px;color:#f4f4f4;font-size:12px;">点</div>
<div class="t tc" style="left:118px;width:120px;top:114px;color:#f4f4f4;font-size:12px;">绘制</div>
<div class="t" style="left:392px;top:40px;color:#f4f4f4;font-size:12px;">移动</div>
<div class="t" style="left:392px;top:66px;color:#f4f4f4;font-size:12px;">复制</div>
<div class="t" style="left:392px;top:92px;color:#f4f4f4;font-size:12px;">拉伸</div>
<div class="t" style="left:452px;top:40px;color:#f4f4f4;font-size:12px;">旋转</div>
<div class="t" style="left:452px;top:66px;color:#f4f4f4;font-size:12px;">镜像</div>
<div class="t" style="left:452px;top:92px;color:#f4f4f4;font-size:12px;">缩放</div>
<div class="t" style="left:512px;top:40px;color:#f4f4f4;font-size:12px;">修剪</div>
<div class="t" style="left:512px;top:66px;color:#f4f4f4;font-size:12px;">延伸</div>
<div class="t" style="left:512px;top:92px;color:#f4f4f4;font-size:12px;">打断</div>
<div class="t" style="left:572px;top:40px;color:#f4f4f4;font-size:12px;">圆角</div>
<div class="t" style="left:572px;top:66px;color:#f4f4f4;font-size:12px;">倒角</div>
<div class="t" style="left:572px;top:92px;color:#f4f4f4;font-size:12px;">阵列</div>
<div class="t tc" style="left:435px;width:120px;top:114px;color:#f4f4f4;font-size:12px;">修改</div>
<div class="t tc" style="left:599px;width:120px;top:82px;color:#f4f4f4;font-size:12px;">文字</div>
<div class="t tc" style="left:646px;width:120px;top:81px;color:#f4f4f4;font-size:12px;">线性</div>
<div class="t" style="left:758px;top:40px;color:#f4f4f4;font-size:12px;">引线</div>
<div class="t" style="left:758px;top:66px;color:#f4f4f4;font-size:12px;">云线</div>
<div class="t" style="left:758px;top:92px;color:#f4f4f4;font-size:12px;">表格</div>
<div class="t tc" style="left:651px;width:120px;top:114px;color:#f4f4f4;font-size:12px;">注释</div>
<div class="t tc" style="left:760px;width:120px;top:88px;color:#f4f4f4;font-size:12px;">插入块</div>
<div class="t" style="left:872px;top:40px;color:#f4f4f4;font-size:12px;">创建块</div>
<div class="t" style="left:872px;top:66px;color:#f4f4f4;font-size:12px;">块管理</div>
<div class="t" style="left:872px;top:92px;color:#f4f4f4;font-size:12px;">属性定义</div>
<div class="t tc" style="left:801px;width:120px;top:114px;color:#f4f4f4;font-size:12px;">块</div>
<div class="t" style="left:962px;top:40px;color:#f4f4f4;font-size:12px;">外部参照</div>
<div class="t" style="left:962px;top:66px;color:#f4f4f4;font-size:12px;">插入图片</div>
<div class="t tc" style="left:919px;width:120px;top:114px;color:#f4f4f4;font-size:12px;">插入</div>
<div class="t tc" style="left:996px;width:120px;top:88px;color:#f4f4f4;font-size:12px;">图层管理</div>
<div class="t" style="left:1164px;top:39px;color:#f4f4f4;font-size:12.6px;">0</div>
<div class="t" style="left:1180px;top:66px;color:#f4f4f4;font-size:12px;">置为当前</div>
<div class="t tc" style="left:1076px;width:120px;top:114px;color:#f4f4f4;font-size:12px;">图层</div>
<div class="t tc" style="left:1211px;width:120px;top:88px;color:#f4f4f4;font-size:12px;">属性刷</div>
<div class="t" style="left:1347px;top:39px;color:#9b9da4;font-size:12.6px;">ByLayer</div>
<div class="t" style="left:1369px;top:66px;color:#9b9da4;font-size:12.6px;">ByLayer</div>
<div class="t" style="left:1373px;top:93px;color:#9b9da4;font-size:12.6px;">ByLayer</div>
<div class="t tc" style="left:1279px;width:120px;top:114px;color:#f4f4f4;font-size:12px;">属性</div>
<div class="t tc" style="left:1402px;width:120px;top:81px;color:#f4f4f4;font-size:12px;">插入视口</div>
<div class="t tc" style="left:1402px;width:120px;top:114px;color:#f4f4f4;font-size:12px;">布局</div>
<div class="t tc" style="left:1457px;width:120px;top:81px;color:#f4f4f4;font-size:12px;">粘贴</div>
<div class="t tc" style="left:1473px;width:120px;top:114px;color:#f4f4f4;font-size:12px;">工具</div>
<div class="t tc" style="left:1545px;width:120px;top:88px;color:#f4f4f4;font-size:12px;">样式设置</div>
<div class="t tc" style="left:1593px;width:120px;top:88px;color:#f4f4f4;font-size:12px;">选项</div>
<div class="t tc" style="left:1569px;width:120px;top:114px;color:#f4f4f4;font-size:12px;">选项</div>
<div class="t tc" style="left:-28px;width:120px;top:136px;color:#ffffff;font-size:12px;">开始</div>
<div class="t" style="left:84px;top:135px;color:#f4f4f4;font-size:12.6px;">Sample</div>
<div class="t" style="left:4px;top:162px;color:#f4f4f4;font-size:12px;">全部(0)</div>
<div class="t" style="left:25px;top:186px;color:#f4f4f4;font-size:12px;">基本</div>
<div class="t" style="left:5px;top:210px;color:#f4f4f4;font-size:12px;">图层</div>
<div class="t" style="left:5px;top:234px;color:#f4f4f4;font-size:12px;">颜色</div>
<div class="t" style="left:5px;top:258px;color:#f4f4f4;font-size:12px;">线宽</div>
<div class="t" style="left:5px;top:282px;color:#f4f4f4;font-size:12px;">线型</div>
<div class="t" style="left:5px;top:306px;color:#f4f4f4;font-size:12px;">线型比例</div>
<div class="t" style="left:5px;top:330px;color:#f4f4f4;font-size:12px;">透明度</div>
<div class="t" style="left:125px;top:210px;color:#9b9da4;font-size:12.6px;">0</div>
<div class="t" style="left:147px;top:234px;color:#9b9da4;font-size:12.6px;">ByLayer</div>
<div class="t" style="left:169px;top:258px;color:#9b9da4;font-size:12.6px;">ByLayer</div>
<div class="t" style="left:173px;top:282px;color:#9b9da4;font-size:12.6px;">ByLayer</div>
<div class="t" style="left:125px;top:306px;color:#9b9da4;font-size:12.6px;">1</div>
<div class="t" style="left:124px;top:331px;color:#9b9da4;font-size:12.6px;">ByLayer</div>
<div class="t" style="left:14px;top:1015.5px;color:#f4f4f4;font-size:12px;">模型</div>
<div class="t" style="left:62px;top:1015.5px;color:#f4f4f4;font-size:12px;">布局1</div>
<div class="t" style="left:113px;top:1015.5px;color:#f4f4f4;font-size:12px;">布局2</div>
<div class="t" style="left:1715px;top:1014px;color:#ececec;font-size:12.4px;">1:1</div>
<div class="t" style="left:1753px;top:1014px;color:#ececec;font-size:12.4px;">63955.4, 31461.2</div>
</body>
</html>
